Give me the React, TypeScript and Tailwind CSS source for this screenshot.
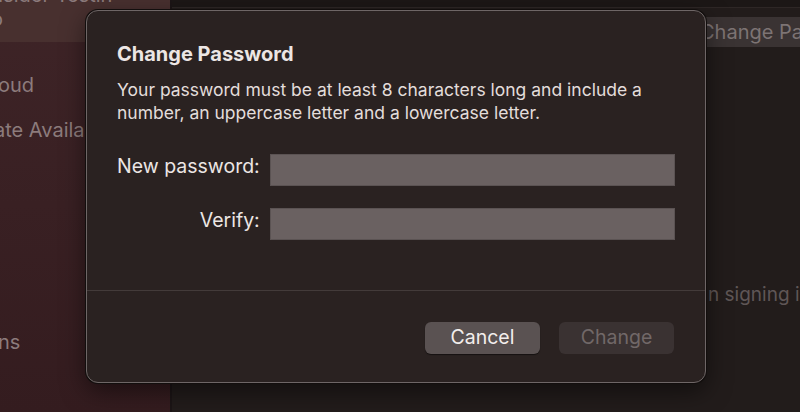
export default function App() {
  return (
    <div className="relative w-[800px] h-[412px] overflow-hidden flex font-['Inter',sans-serif]">
      <aside className="w-[172px] shrink-0 flex flex-col bg-gradient-to-b from-[#3e2427] to-[#341c1f] border-r-2 border-[#1c1516] text-[#8c7b7c] text-[20px]">
        <div className="h-[42px] bg-[#48302f] whitespace-nowrap overflow-hidden">
          <div className="-mt-[17px] leading-[24px]">
            <div className="-ml-[14px]">Insider Testin</div>
            <div className="-ml-[9px]">o</div>
          </div>
        </div>
        <div className="mt-[29px] -ml-[2px] leading-[28px] whitespace-nowrap">oud</div>
        <div className="mt-[17px] -ml-[6px] leading-[28px] whitespace-nowrap">ate Availa</div>
        <div className="mt-[184px] -ml-[2px] leading-[28px]">ns</div>
      </aside>
      <main className="flex-1 bg-[#221c1b] flex flex-col">
        <div className="h-[8px] bg-[#1c1716] border-b border-[#2e2726]" />
        <div className="flex justify-end mt-[9px]">
          <div className="w-[112px] h-[30px] bg-[#3a3333] text-[#7d7474] text-[20px] leading-[30px] whitespace-nowrap overflow-hidden pl-[12px]">
            Change Pa
          </div>
        </div>
        <div className="mt-[234px] flex justify-end text-[#5f5656] text-[19px] whitespace-nowrap overflow-hidden">
          <div className="w-[92px] overflow-hidden">n signing in</div>
        </div>
      </main>

      <div className="absolute left-[86px] top-[10px] w-[620px] h-[373px] rounded-[12px] bg-[#2a2221] border border-[#6e6666] shadow-[0_0_0_1px_#120e0d,0_8px_24px_rgba(0,0,0,0.5)] flex flex-col">
        <div className="px-[30px] pt-[30px]">
          <h1 className="text-[#ece6e4] text-[20px] font-bold leading-[26px]">Change Password</h1>
          <p className="mt-[11px] w-[540px] text-[#e3dddb] text-[17.5px] leading-[23px]">
            Your password must be at least 8 characters long and include a number, an uppercase letter and a lowercase letter.
          </p>
          <div className="mt-[30px] flex flex-col gap-[22px]">
            <div className="flex items-start">
              <label className="w-[143px] text-right text-[#ece6e4] text-[19.5px] leading-[24px]">New password:</label>
              <div className="ml-[10px] w-[406px] h-[32px] bg-[#6a6161] border border-[#5b5353]" />
            </div>
            <div className="flex items-start">
              <label className="w-[143px] text-right text-[#ece6e4] text-[19.5px] leading-[24px]">Verify:</label>
              <div className="ml-[10px] w-[406px] h-[32px] bg-[#6a6161] border border-[#5b5353]" />
            </div>
          </div>
        </div>
        <div className="mt-auto border-t border-[#433b3a] h-[92px] flex justify-end items-start pt-[31px] pr-[31px] gap-[19px]">
          <button className="w-[115px] h-[32px] rounded-[6px] bg-[#5a5252] text-[#f2eeec] text-[19.5px] shadow-[0_1px_1px_rgba(0,0,0,0.5)]">
            Cancel
          </button>
          <button className="w-[115px] h-[32px] rounded-[6px] bg-[#3a3232] text-[#716868] text-[19.5px]">
            Change
          </button>
        </div>
      </div>
    </div>
  )
}
